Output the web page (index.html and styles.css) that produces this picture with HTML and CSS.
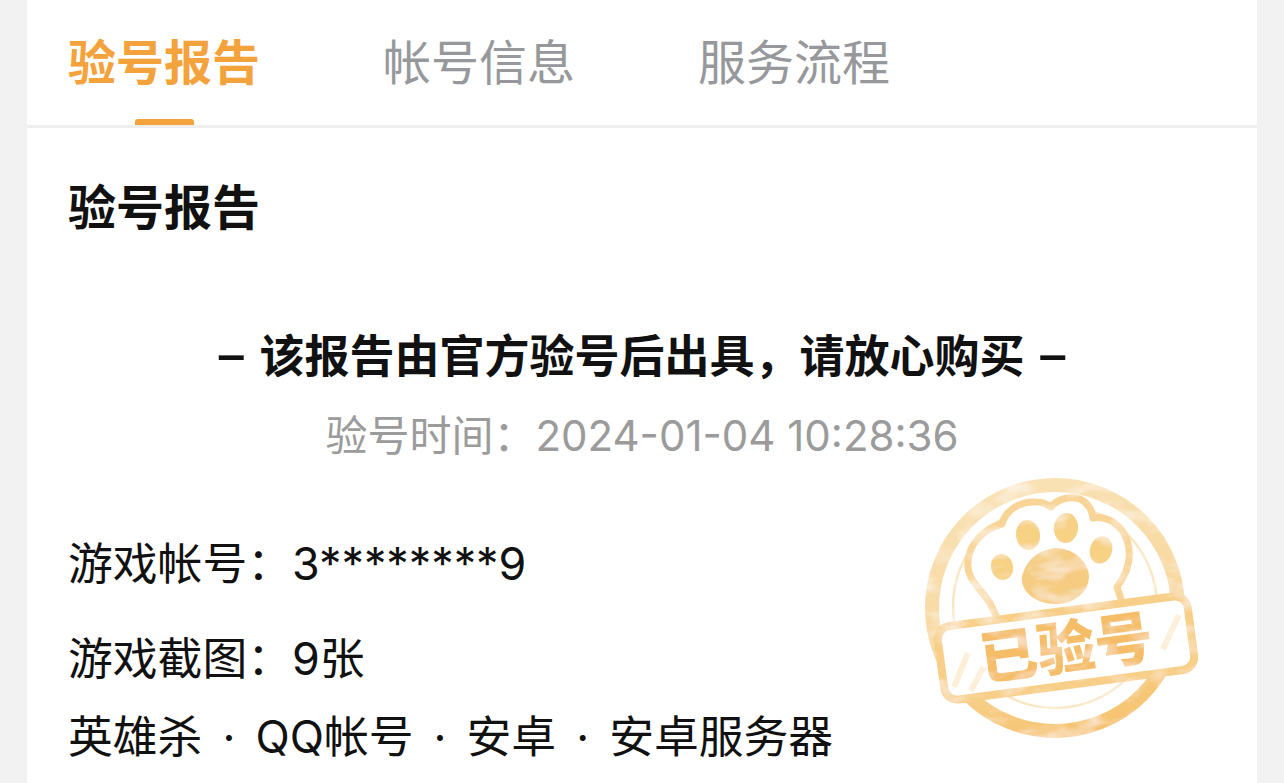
FILE: index.html
```html
<!DOCTYPE html>
<html lang="zh-CN">
<head>
    <meta charset="UTF-8">
    <title>验号报告</title>
    <link rel="stylesheet" href="styles.css">
</head>
<body>
    <div class="card">
        <!-- Tabs -->
        <div class="tabs">
            <div class="tab active">验号报告</div>
            <div class="tab">帐号信息</div>
            <div class="tab">服务流程</div>
        </div>

        <!-- Report -->
        <div class="report">
            <h2>验号报告</h2>
            <p class="notice"><span class="dash">–</span> 该报告由官方验号后出具，请放心购买 <span class="dash">–</span></p>
            <p class="time">验号时间：2024-01-04 10:28:36</p>
            <p class="row first">游戏帐号：3********9</p>
            <p class="row">游戏截图：9张</p>
            <p class="row tags">
                <span>英雄杀</span><span class="dot">·</span><span>QQ帐号</span><span class="dot">·</span><span>安卓</span><span class="dot">·</span><span>安卓服务器</span>
            </p>

            <svg class="stamp" viewBox="0 0 320 300" width="320" height="300">
                <defs>
                    <linearGradient id="ring-fade" x1="0.3" y1="0" x2="0.6" y2="1">
                        <stop offset="0" stop-color="#f9e2b6"/>
                        <stop offset="0.55" stop-color="#f8d89e"/>
                        <stop offset="1" stop-color="#f6c470"/>
                    </linearGradient>
                    <filter id="wash" filterUnits="userSpaceOnUse" x="0" y="0" width="320" height="300">
                        <feTurbulence type="fractalNoise" baseFrequency="0.03 0.06" numOctaves="3" seed="4" result="noise"/>
                        <feColorMatrix in="noise" type="matrix" values="0 0 0 0 1  0 0 0 0 1  0 0 0 0 1  1.300 0 0 0 -0.6" result="light"/>
                        <feComposite in="light" in2="SourceGraphic" operator="atop" result="mottled"/>
                        <feGaussianBlur in="mottled" stdDeviation="0.4"/>
                    </filter>
                </defs>
                <g filter="url(#wash)">
                    <circle cx="155" cy="148" r="123" fill="none" stroke="url(#ring-fade)" stroke-width="14"/>
                    <circle cx="155" cy="146" r="102" fill="none" stroke="#fae6c2" stroke-width="2.5"/>
                    <path d="M 97 158 L 90 143 C 80 128 66 118 68 103 C 68 85 84 68 102 64 C 106 50 120 41 136 42 C 142 42 147 44 151 47 C 158 38 172 36 180 39 C 188 43 192 50 193 58 C 208 55 222 66 227 80 C 233 98 226 115 217 127 L 222 142" fill="#fff" stroke="#f8d596" stroke-width="7" stroke-linejoin="round"/>
                    <ellipse cx="102" cy="107" rx="11" ry="13" fill="#f7d184" transform="rotate(-15 102 107)"/>
                    <ellipse cx="128" cy="75" rx="12" ry="15" fill="#f7d184" transform="rotate(-8 128 75)"/>
                    <ellipse cx="166" cy="68" rx="12" ry="15" fill="#f7d184" transform="rotate(6 166 68)"/>
                    <ellipse cx="201" cy="90" rx="11" ry="14" fill="#f7d184" transform="rotate(18 201 90)"/>
                    <path d="M 122 116 C 126 102 136 90 156 88 C 174 88 188 102 189 116 C 189 132 174 144 156 144 C 136 144 120 132 122 116 Z" fill="#f6cc82"/>
                    <g transform="rotate(-7.500 166 188)">
                        <rect x="40" y="151" width="252" height="74" rx="13" fill="#fff" stroke="#f7cf88" stroke-width="8"/>
                        <path d="M 50 212 L 68 180 M 66 218 L 82 196 M 282 170 L 262 202" stroke="#fdeed6" stroke-width="6"/>
                        <text class="stamp-text" x="166" y="209" text-anchor="middle">已验号</text>
                    </g>
                </g>
            </svg>
        </div>
    </div>
</body>
</html>
```

FILE: styles.css
```css
/* Global Styles */
html, body {
    height: 100%;
}

body {
    margin: 0;
    padding: 0 27px;
    background-color: #f2f2f2;
    color: #111;
    font-family: Inter, "Noto Sans CJK SC", sans-serif;
    overflow: hidden;
}

.card {
    background-color: #fff;
    height: 100%;
}

/* Tabs */
.tabs {
    display: flex;
    gap: 123px;
    padding: 0 41px;
    height: 125px;
    border-bottom: 3px solid #eeeeee;
}

.tab {
    position: relative;
    font-size: 48px;
    line-height: 125px;
    color: #96989c;
}

.tab.active {
    color: #f4a23b;
    font-weight: 700;
}

.tab.active::after {
    content: "";
    position: absolute;
    left: 67px;
    bottom: 0;
    width: 59px;
    height: 6px;
    border-radius: 3px 3px 0 0;
    background-color: #f4a23b;
}

/* Report */
.report {
    position: relative;
    padding: 0 41px;
}

.report h2 {
    margin: 0;
    padding-top: 49px;
    font-size: 48px;
    line-height: 62px;
    font-weight: 700;
}

.notice {
    margin: 87px 0 0;
    text-align: center;
    font-size: 45px;
    line-height: 62px;
    font-weight: 700;
    word-spacing: 5px;
}

.dash {
    font-size: 50px;
    line-height: 1;
    font-weight: 500;
}

.time {
    margin: 17px 0 0;
    text-align: center;
    font-size: 42px;
    line-height: 62px;
    color: #9b9b9b;
}

.row {
    margin: 0;
    font-size: 44.800px;
    line-height: 62px;
}

.row.first {
    margin-top: 66px;
}

.row + .row {
    margin-top: 33px;
}

.row.tags {
    margin-top: 16px;
    display: flex;
}

.dot {
    width: 53px;
    text-align: center;
}

.stamp {
    position: absolute;
    left: 873px;
    top: 332px;
}

.stamp-text {
    font-family: "Noto Sans CJK SC", sans-serif;
    font-size: 58px;
    font-weight: 900;
    fill: #f5bd68;
}
```
